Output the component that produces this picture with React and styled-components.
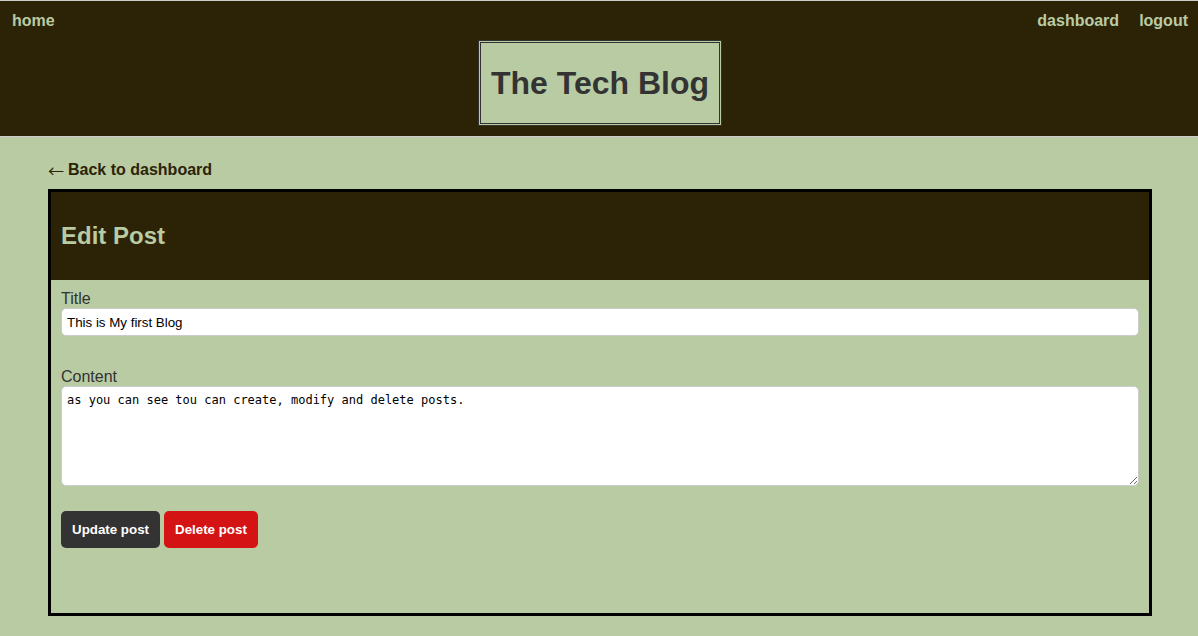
import React, { useState } from "react";
import styled, { createGlobalStyle, ThemeProvider } from "styled-components";

const theme = {
  sage: "#b9cba3",
  bark: "#2c2307",
  ink: "#333333",
  line: "#cccccc",
  danger: "#d41315",
};

const GlobalStyle = createGlobalStyle`
  *, *::before, *::after { box-sizing: border-box; }
  body {
    margin: 0;
    background: ${theme.sage};
    color: ${theme.ink};
    font: 16px/18px "Liberation Sans", Arial, sans-serif;
  }
`;

const Header = styled.header`
  display: flex;
  flex-direction: column;
  gap: 10px;
  padding: 10px 10px 10px 12px;
  background: ${(p) => p.theme.bark};
  border: solid ${(p) => p.theme.line};
  border-width: 1px 0;
`;

const Nav = styled.nav`
  display: flex;
  gap: 20px;
  line-height: 19px;
`;

const NavLink = styled.a`
  color: ${(p) => p.theme.sage};
  font-weight: bold;
  text-decoration: none;
  margin-right: ${(p) => (p.$spread ? "auto" : "0")};
`;

const SiteTitle = styled.h1`
  align-self: center;
  margin: 0;
  padding: 20px 10px;
  border: 3px double ${(p) => p.theme.ink};
  background: ${(p) => p.theme.sage};
  font-size: 32px;
  line-height: 40px;
`;

const Main = styled.main`
  padding: 24px 46px 20px 48px;
`;

const BackLink = styled.p`
  display: flex;
  gap: 4px;
  margin: 0 0 10px;
  color: ${(p) => p.theme.bark};

  a {
    color: inherit;
    font-weight: bold;
    text-decoration: none;
  }
`;

const Arrow = styled.span`
  font-family: "Noto Sans CJK JP", sans-serif;
`;

const Panel = styled.section`
  border: 3px solid #000;
`;

const PanelHeader = styled.div`
  padding: 30px 10px;
  background: ${(p) => p.theme.bark};
  color: ${(p) => p.theme.sage};

  h2 {
    margin: 0;
    font-size: 24px;
    line-height: 28px;
  }
`;

const Form = styled.form`
  display: flex;
  flex-direction: column;
  padding: 9px 10px 65px;
`;

const Label = styled.label`
  line-height: 19px;
`;

const TextInput = styled.input`
  height: 28px;
  margin-bottom: 31px;
  padding: 5px;
  border: 1px solid ${(p) => p.theme.line};
  border-radius: 5px;
  background: #fff;
  color: #000;
  font-family: "Liberation Sans", Arial, sans-serif;
`;

const TextArea = styled.textarea`
  height: 100px;
  margin-bottom: 25px;
  padding: 5px;
  border: 1px solid ${(p) => p.theme.line};
  border-radius: 5px;
  background: #fff;
  color: #000;
  font: 12px/16px Consolas, "DejaVu Sans Mono", monospace;
  resize: vertical;
`;

const Actions = styled.div`
  display: flex;
  gap: 4px;
`;

const Button = styled.button`
  padding: 11px;
  border: 0;
  border-radius: 5px;
  background: ${(p) => (p.$danger ? p.theme.danger : p.theme.ink)};
  color: #fff;
  font-family: "Liberation Sans", Arial, sans-serif;
  font-weight: bold;
  line-height: 15px;
  cursor: pointer;
`;

export default function App() {
  const [title, setTitle] = useState("This is My first Blog");
  const [content, setContent] = useState(
    "as you can see tou can create, modify and delete posts."
  );

  return (
    <ThemeProvider theme={theme}>
      <GlobalStyle />
      <Header>
        <Nav>
          <NavLink href="#home" $spread>home</NavLink>
          <NavLink href="#dashboard">dashboard</NavLink>
          <NavLink href="#logout">logout</NavLink>
        </Nav>
        <SiteTitle>The Tech Blog</SiteTitle>
      </Header>
      <Main>
        <BackLink>
          <Arrow>←</Arrow>
          <a href="#dashboard">Back to dashboard</a>
        </BackLink>
        <Panel>
          <PanelHeader>
            <h2>Edit Post</h2>
          </PanelHeader>
          <Form onSubmit={(e) => e.preventDefault()}>
            <Label htmlFor="title">Title</Label>
            <TextInput
              id="title"
              type="text"
              value={title}
              onChange={(e) => setTitle(e.target.value)}
            />
            <Label htmlFor="content">Content</Label>
            <TextArea
              id="content"
              value={content}
              onChange={(e) => setContent(e.target.value)}
            />
            <Actions>
              <Button type="submit">Update post</Button>
              <Button type="button" $danger>Delete post</Button>
            </Actions>
          </Form>
        </Panel>
      </Main>
    </ThemeProvider>
  );
}
